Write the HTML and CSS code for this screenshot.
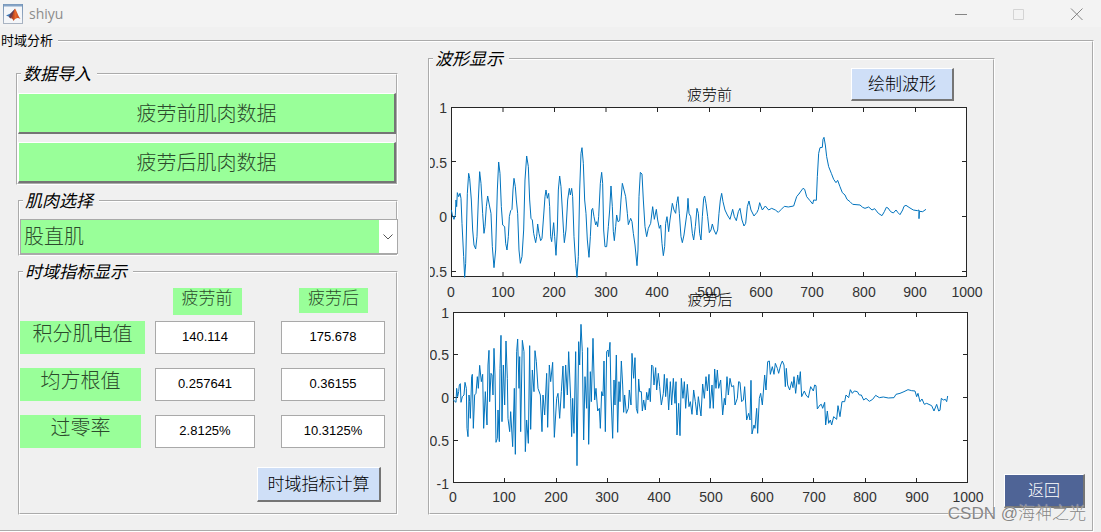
FILE: index.html
```html
<!DOCTYPE html>
<html lang="zh-CN">
<head>
<meta charset="utf-8">
<title>shiyu</title>
<link rel="stylesheet" href="styles.css">
</head>
<body>
<header class="titlebar">
  <svg class="app-icon" viewBox="0 0 20 20" aria-hidden="true">
    <defs>
      <linearGradient id="frame" x1="0" y1="0" x2="0" y2="1"><stop offset="0" stop-color="#7494b8"/><stop offset="1" stop-color="#aab4c2"/></linearGradient>
      <linearGradient id="flame" x1="0" y1="0" x2="1" y2="0"><stop offset="0" stop-color="#8c2416"/><stop offset=".5" stop-color="#e8662a"/><stop offset="1" stop-color="#b83a1c"/></linearGradient>
    </defs>
    <rect x=".5" y=".5" width="19" height="19" fill="#f4f6f9" stroke="url(#frame)"/>
    <path d="M1 1.500h18" stroke="#86a4c6" stroke-width="2"/>
    <path d="M3 11.500 7.500 9.500 10 7 12 5 10.500 10 7.500 14 5.500 12.500z" fill="#3f78b5"/>
    <path d="M7.500 9.500 10 7 12 4.800 10.500 11 7.500 14.500 6 13z" fill="#6b3b4c"/>
    <path d="M12 4.500C13.500 6 14.500 11 17.500 15 15 13.500 13 13.500 10.500 17 9.500 14.500 8.500 14 7.500 14.500 10 12 10.500 7 12 4.500z" fill="url(#flame)"/>
  </svg>
  <h1 class="app-name">shiyu</h1>
  <div class="window-controls">
    <button class="win-btn" aria-label="最小化"><svg viewBox="0 0 12 12"><path d="M0 6.500h12"/></svg></button>
    <button class="win-btn win-disabled" aria-label="最大化" disabled><svg viewBox="0 0 12 12"><path d="M.5 1.500h10v10H.5z"/></svg></button>
    <button class="win-btn" aria-label="关闭"><svg viewBox="0 0 12 12"><path d="M0 .5 11.500 12M11.500.5 0 12"/></svg></button>
  </div>
</header>

<fieldset class="workspace">
  <legend>时域分析</legend>
  <div class="columns">
    <div class="side">
      <fieldset class="panel import">
        <legend>数据导入</legend>
        <div class="stack">
          <button class="btn load">疲劳前肌肉数据</button>
          <button class="btn load">疲劳后肌肉数据</button>
        </div>
      </fieldset>

      <fieldset class="panel muscle">
        <legend>肌肉选择</legend>
        <div class="dropdown">
          <select aria-label="肌肉选择"><option>股直肌</option></select>
          <svg class="chevron" viewBox="0 0 10 6" aria-hidden="true"><path d="M.5.5 5 5 9.500.5"/></svg>
        </div>
      </fieldset>

      <fieldset class="panel metrics">
        <legend>时域指标显示</legend>
        <div class="row heads">
          <span></span>
          <span class="tag head" id="before">疲劳前</span>
          <span class="tag head" id="after">疲劳后</span>
        </div>
        <div class="rows">
          <div class="row">
            <label class="tag name" id="iemg" for="iemg1">积分肌电值</label>
            <input id="iemg1" value="140.114" aria-labelledby="iemg before">
            <input class="second" value="175.678" aria-labelledby="iemg after">
          </div>
          <div class="row">
            <label class="tag name short" id="rms" for="rms1">均方根值</label>
            <input id="rms1" value="0.257641" aria-labelledby="rms before">
            <input class="second" value="0.36155" aria-labelledby="rms after">
          </div>
          <div class="row">
            <label class="tag name short" id="zcr" for="zcr1">过零率</label>
            <input id="zcr1" value="2.8125%" aria-labelledby="zcr before">
            <input class="second" value="10.3125%" aria-labelledby="zcr after">
          </div>
        </div>
        <button class="btn blue compute">时域指标计算</button>
      </fieldset>
    </div>

    <fieldset class="panel waves">
      <legend>波形显示</legend>
      <div class="wave-head">
        <h2>疲劳前</h2>
        <button class="btn blue draw">绘制波形</button>
      </div>
      <svg class="plots" viewBox="430 101 563 407" role="img" aria-label="疲劳前与疲劳后波形">
        <!-- upper axes -->
        <rect class="axes" x="451.500" y="107.500" width="515" height="169"/>
        <path class="ticks" d="M503 107v5M554.500 107v5M606 107v5M657.500 107v5M709.500 107v5M760.500 107v5M812.500 107v5M863.500 107v5M915.500 107v5M503 277v-5M554.500 277v-5M606 277v-5M657.500 277v-5M709.500 277v-5M760.500 277v-5M812.500 277v-5M863.500 277v-5M915.500 277v-5M451 161.500h5M451 216.500h5M451 271.500h5M967 161.500h-5M967 216.500h-5M967 271.500h-5"/>
        <g class="y-labels"><text x="447" y="113">1</text><text x="447" y="168">0.5</text><text x="447" y="222">0</text><text x="447" y="277">-0.5</text></g>
        <g class="x-labels"><text x="451" y="297">0</text><text x="503" y="297">100</text><text x="554" y="297">200</text><text x="606" y="297">300</text><text x="657" y="297">400</text><text x="709" y="297">500</text><text x="761" y="297">600</text><text x="812" y="297">700</text><text x="864" y="297">800</text><text x="915" y="297">900</text><text x="967" y="297">1000</text></g>
        <g class="trace" transform="translate(420 50) scale(.33333)">
          <path d="M94 480L97 495 102 508 106 495 108 450 110 470 112 428 116 440 120 430 123 445 126 520 131 620 134 682 137 640 142 430 146 370 149 385 154 450 158 540 162 585 167 597 171 560 175 450 179 365 183 400 188 490 192 550 195 530 199 470 203 438 208 465 213 490 217 590 222 653 227 600 232 420 236 336 240 370 244 470 248 525 254 530 257 580 261 600 265 560 268 500 272 482 276 478 279 420 282 385 286 410 289 450 293 490 297 600 301 640 306 620 311 540 315 390 320 318 325 350 329 450 333 505 337 510 341 550 347 578 350 560 353 522 357 550 362 572 366 565 370 510 375 440 378 420 382 445 386 430 389 470 392 560 395 575 401 518 404 560 408 616 412 540 415 420 419 378 423 410 427 480 431 550 433 578 438 540 443 450 448 415 451 435 455 415 458 440 462 560 467 640 471 682 475 620 479 420 483 310 486 293 490 340 494 450 498 490 502 570 507 622 511 560 515 480 518 475 522 500 527 525 530 515 533 530 536 500 541 400 545 367 548 400 551 540 555 590 560 590 565 530 569 480 573 408 577 470 580 545 583 572 587 530 590 495 594 515 599 512"/>
          <path transform="translate(600)" d="M-1 512L3 450 7 400 12 420 17 440 22 490 25 524 32 505 36 515 40 550 45 585 51 647 54 600 57 440 61 367 66 372 70 450 75 530 80 560 85 535 92 520 98 470 103 508 109 478 113 510 118 535 122 525 126 580 130 617 134 590 137 520 141 500 146 545 150 510 157 460 162 480 167 490 170 460 174 440 178 490 183 560 187 578 192 555 198 510 202 480 204 445 207 490 212 500 217 550 221 570 226 530 231 475 235 490 239 550 243 570 247 500 251 445 254 438 258 460 263 500 268 548 273 540 277 522 282 540 288 553 293 540 297 490 301 450 305 430 309 455 315 480 322 495 330 508 338 478 343 500 349 512 355 485 360 475 366 510 372 528 377 520 382 470 387 453 393 480 402 498 411 487 415 478 419 458 427 480 436 468 446 480 455 475 466 480 475 487 484 478 493 469 505 471 521 468 530 440 538 430 540 432"/>
          <path transform="translate(1140)" d="M-2 430L9 415 14 418 20 440 30 452 38 462 41 450 49 451 52 380 56 310 60 293 67 292 69 268 72 262 76 285 80 320 86 350 94 370 101 388 108 398 113 391 120 410 127 428 135 435 141 448 150 455 158 463 180 465 188 472 195 475 206 471 216 480 224 476 235 490 246 497 253 485 259 472 264 474 272 485 280 489 288 480 294 488 300 494 308 480 312 469 318 466 330 474 340 480 352 482 357 480 357 506 358 484 368 485 378 478" pathLength="1"/>
        </g>
        <!-- lower axes -->
        <text class="plot-title" x="710" y="305">疲劳后</text>
        <rect class="axes" x="453.500" y="312.500" width="514" height="170"/>
        <path class="ticks" d="M504.500 312v5M556.500 312v5M607.500 312v5M659.500 312v5M710.500 312v5M762.500 312v5M813.500 312v5M865.500 312v5M916.500 312v5M504.500 483v-5M556.500 483v-5M607.500 483v-5M659.500 483v-5M710.500 483v-5M762.500 483v-5M813.500 483v-5M865.500 483v-5M916.500 483v-5M453 354.500h5M453 397.500h5M453 440.500h5M968 354.500h-5M968 397.500h-5M968 440.500h-5"/>
        <g class="y-labels"><text x="449" y="318">1</text><text x="449" y="360">0.5</text><text x="449" y="403">0</text><text x="449" y="446">-0.5</text><text x="449" y="489">-1</text></g>
        <g class="x-labels"><text x="453" y="502">0</text><text x="504" y="502">100</text><text x="556" y="502">200</text><text x="607" y="502">300</text><text x="659" y="502">400</text><text x="711" y="502">500</text><text x="762" y="502">600</text><text x="814" y="502">700</text><text x="865" y="502">800</text><text x="917" y="502">900</text><text x="968" y="502">1000</text></g>
        <g class="trace" transform="translate(420 285) scale(.33333)">
          <path d="M100 345L108 352 110 310 113 335 116 320 118 300 121 296 123 352 127 335 132 330 135 292 139 310 141 430 144 455 147 330 149 350 151 400 155 275 157 268 160 430 164 330 168 325 172 275 175 310 179 241 184 290 188 268 191 430 196 320 201 420 204 240 207 196 209 350 213 265 216 270 219 330 222 190 225 270 228 472 232 460 234 375 238 470 240 250 243 151 246 410 250 240 254 360 258 168 262 280 264 400 269 440 272 380 278 485 283 310 286 508 290 200 293 162 297 310 299 215 302 440 307 166 312 200 316 500 320 405 325 475 329 182 332 433 337 255 342 320 345 197 349 230 354 310 361 330 366 440 369 330 374 390 380 265 383 427 388 240 392 290 398 232 403 457 410 340 414 325 419 400 424 320 429 243 432 370 437 240 442 330 446 200 452 340 455 455 458 340 462 445 467 200 471 542 476 170 479 240 483 118 487 200 491 465 495 275 500 370 503 188 506 478 511 260 514 350 519 160 524 345 528 310 533 378 538 370 541 430 545 320 549 333 552 228 556 440 560 200 564 195 566 215 570 172 573 330 578 460 582 285 585 360 589 210 593 442 597 290 600 350"/>
          <path transform="translate(600)" d="M0 350L4 228 8 300 11 382 14 330 19 385 25 370 28 315 33 360 36 205 41 280 45 218 49 370 53 385 56 282 59 320 64 320 67 378 71 345 76 375 80 322 84 345 88 310 91 350 95 240 99 245 102 300 107 248 110 315 115 265 119 305 124 360 130 325 133 268 137 335 141 280 146 375 151 290 155 360 160 280 165 355 168 290 171 450 176 355 180 452 184 280 189 340 193 290 197 370 202 298 207 365 211 350 216 388 221 315 226 350 231 390 235 335 243 393 248 297 253 340 258 275 262 318 267 268 270 370 276 300 280 370 284 252 288 310 292 255 296 310 302 285 308 390 313 340 316 360 321 275 325 330 330 280 335 305 341 302 345 360 352 340 356 290 360 292 365 350 370 345 374 305 380 405 386 385 390 405 393 286 396 447 402 420 405 430 410 370 413 445 418 340 422 325 427 360 434 270 438 315 443 230 448 228 451 268 457 245 462 268 466 235 472 250 476 265 482 240 487 228 492 240 496 305 499 250 503 300 509 315 515 290 519 308 522 275 527 325 533 270 537 298 541 260 545 335 553 318 558 330 565 338 572 305 580 318 584 300 588 302 592 372 600 360"/>
          <path transform="translate(1200)" d="M0 360L4 358 8 370 14 352 17 420 22 378 26 415 31 405 35 420 41 395 50 403 54 362 60 395 66 350 74 350 78 330 86 338 91 314 97 325 103 318 112 320 118 330 124 330 131 345 138 340 148 349 158 343 167 331 178 338 190 336 205 339 222 338 228 328 240 325 252 320 264 314 275 317 285 318 290 335 294 325 300 350 306 342 313 358 320 355 335 362 342 378 350 358 356 378 360 376 364 340 370 345 376 343 380 350 383 333"/>
        </g>
      </svg>
    </fieldset>

    <button class="btn back">返回</button>
  </div>
</fieldset>
<p class="watermark">CSDN @海神之光</p>
</body>
</html>
```

FILE: styles.css
```css
* { box-sizing: border-box; }

body {
  margin: 0;
  min-height: 100vh;
  display: flex;
  flex-direction: column;
  position: relative;
  background: #f0f0f0;
  color: #000;
  font-family: "Liberation Sans", "Noto Sans CJK SC", sans-serif;
}

h1, h2, p { margin: 0; font-weight: 400; }

button, input, select { font: inherit; margin: 0; }

.titlebar {
  display: flex;
  align-items: center;
  gap: 6px;
  height: 27px;
  padding-left: 3px;
  background: #f3f3f3;
}

.app-icon { width: 20px; height: 20px; }

.app-name {
  font-family: "Open Sans", "Noto Sans", sans-serif;
  font-size: 14px;
  line-height: 20px;
  color: #8c8c8c;
}

.window-controls {
  display: flex;
  gap: 34px;
  margin-left: auto;
  padding-right: 12px;
}

.win-btn {
  width: 24px;
  height: 24px;
  padding: 6px;
  border: 0;
  background: none;
}

.win-btn svg {
  display: block;
  width: 12px;
  height: 12px;
  overflow: visible;
  fill: none;
  stroke: #858585;
}

.win-disabled svg { stroke: #d4d4d4; }

fieldset {
  min-width: 0;
  margin: 0;
  padding: 0;
  border: 2px groove #fff;
}

.workspace {
  flex: 1;
  margin: 7px 7px 0 0;
  border-left: 0;
}

.workspace > legend {
  padding: 0 5px 0 1px;
  font-size: 13px;
  line-height: 14px;
}

.columns {
  display: grid;
  grid-template-columns: minmax(0, 403fr) minmax(0, 567fr) 81px;
  column-gap: 9px;
  align-items: start;
  padding: 2px 7px 14px 16px;
}

.side {
  display: flex;
  flex-direction: column;
  gap: 7px;
  padding: 15px 21px 0 0;
}

.panel > legend {
  margin-left: 3px;
  padding: 2px 6px 0 2px;
  font-size: 17px;
  font-style: italic;
  line-height: 16px;
}

.import { padding-top: 10px; }

.stack {
  display: flex;
  flex-direction: column;
  gap: 8px;
}

.btn {
  padding: 0;
  border-style: solid;
  border-width: 1px 2px 2px 1px;
  border-color: #fff #757575 #757575 #fff;
  border-radius: 0;
  font-weight: 300;
}

.load {
  height: 41px;
  padding-bottom: 2px;
  background: #9f9;
  color: #2c4a2c;
  font-size: 20px;
}

.muscle { margin-left: 2px; padding-top: 9px; }

.dropdown {
  position: relative;
  margin-right: -2px;
}

.dropdown select {
  appearance: none;
  display: block;
  width: 100%;
  height: 35px;
  padding: 0 20px 0 3px;
  border: 1px solid #a9a9a9;
  border-radius: 0;
  background: linear-gradient(to right, #9f9 calc(100% - 18px), #fff 0);
  color: #2c4a2c;
  font-size: 20px;
  font-weight: 300;
}

.chevron {
  position: absolute;
  right: 5px;
  top: 15px;
  width: 10px;
  height: 6px;
  fill: none;
  stroke: #555;
  pointer-events: none;
}

.metrics {
  margin-left: 2px;
  padding: 7px 11px 11px 0;
}

.row {
  display: grid;
  grid-template-columns: 125fr 100fr 120fr;
  column-gap: 10px;
}

.heads { margin-bottom: 6px; }

.rows { display: grid; row-gap: 14px; }

.tag {
  background: #9f9;
  color: #2c4a2c;
  font-weight: 300;
  text-align: center;
}

.head {
  justify-self: center;
  width: 69px;
  height: 27px;
  margin-left: 4px;
  font-size: 17px;
  line-height: 22px;
}

.head:last-child { margin-left: 17px; height: 25px; }

.name {
  height: 33px;
  font-size: 20px;
  line-height: 27px;
}

.short { margin-right: 4px; }

.row input {
  width: 100%;
  height: 33px;
  padding: 0 0 2px;
  border: 1px solid #a9a9a9;
  background: #fff;
  font-size: 13px;
  text-align: center;
}

.row .second { justify-self: end; width: 104px; }

.blue {
  padding-bottom: 4px;
  background: #cfdff7;
  font-size: 17px;
}

.compute {
  display: block;
  width: 124px;
  height: 35px;
  margin: 19px 4px 0 auto;
}

.wave-head {
  display: grid;
  grid-template-columns: 1fr auto 1fr;
  align-items: end;
  padding-right: 39px;
  padding-left: 35px;
}

.wave-head h2 {
  grid-column: 2;
  font-size: 15px;
  font-weight: 300;
  line-height: 12px;
}

.draw {
  justify-self: end;
  width: 103px;
  height: 33px;
}

.waves { padding-bottom: 5px; }

.plots { display: block; width: 100%; }

.axes { fill: #fff; stroke: #262626; }

.ticks { fill: none; stroke: #262626; }

.y-labels, .x-labels { font-size: 14px; fill: #333; }

.y-labels { text-anchor: end; }

.x-labels { text-anchor: middle; }

.plot-title {
  font-size: 15px;
  font-weight: 300;
  text-anchor: middle;
}

.trace {
  fill: none;
  stroke: #0072bd;
  stroke-width: 3;
  stroke-linejoin: round;
}

.back {
  align-self: end;
  height: 34px;
  margin-bottom: 7px;
  padding-bottom: 4px;
  background: #4f6496;
  color: #fff;
  font-size: 16px;
}

.watermark {
  position: absolute;
  right: 15px;
  bottom: 6px;
  font-size: 17px;
  font-weight: 300;
  line-height: 24px;
  color: #858585;
  text-shadow: 0 0 1px #fff;
}
```
